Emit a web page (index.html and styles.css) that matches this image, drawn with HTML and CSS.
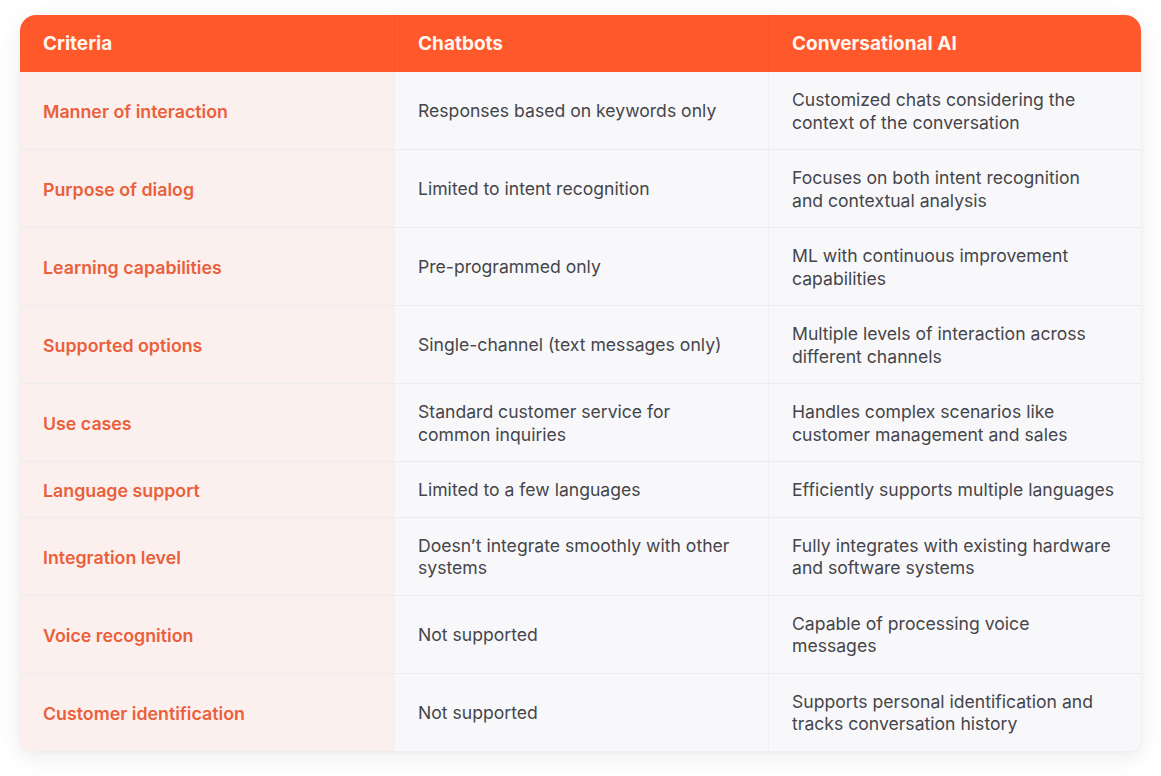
FILE: index.html
```html
<!DOCTYPE html>
<html lang="en">
<head>
<meta charset="utf-8">
<title>Chatbots vs Conversational AI</title>
<link rel="stylesheet" href="styles.css">
</head>
<body>
<div class="page">
  <div class="table">
    <div class="row head">
      <div class="cell">Criteria</div>
      <div class="cell">Chatbots</div>
      <div class="cell">Conversational AI</div>
    </div>
    <div class="row">
      <div class="cell crit">Manner of interaction</div>
      <div class="cell">Responses based on keywords only</div>
      <div class="cell">Customized chats considering the context of the conversation</div>
    </div>
    <div class="row">
      <div class="cell crit">Purpose of dialog</div>
      <div class="cell">Limited to intent recognition</div>
      <div class="cell">Focuses on both intent recognition and contextual analysis</div>
    </div>
    <div class="row">
      <div class="cell crit">Learning capabilities</div>
      <div class="cell">Pre-programmed only</div>
      <div class="cell">ML with continuous improvement capabilities</div>
    </div>
    <div class="row">
      <div class="cell crit">Supported options</div>
      <div class="cell">Single-channel (text messages only)</div>
      <div class="cell">Multiple levels of interaction across different channels</div>
    </div>
    <div class="row">
      <div class="cell crit">Use cases</div>
      <div class="cell">Standard customer service for common inquiries</div>
      <div class="cell">Handles complex scenarios like customer management and sales</div>
    </div>
    <div class="row">
      <div class="cell crit">Language support</div>
      <div class="cell">Limited to a few languages</div>
      <div class="cell">Efficiently supports multiple languages</div>
    </div>
    <div class="row">
      <div class="cell crit">Integration level</div>
      <div class="cell">Doesn’t integrate smoothly with other systems</div>
      <div class="cell">Fully integrates with existing hardware and software systems</div>
    </div>
    <div class="row">
      <div class="cell crit">Voice recognition</div>
      <div class="cell">Not supported</div>
      <div class="cell">Capable of processing voice messages</div>
    </div>
    <div class="row last">
      <div class="cell crit">Customer identification</div>
      <div class="cell">Not supported</div>
      <div class="cell">Supports personal identification and tracks conversation history</div>
    </div>
  </div>
</div>
</body>
</html>
```

FILE: styles.css
```css
* { box-sizing: border-box; }
html, body { margin: 0; padding: 0; background: #ffffff; }
body {
  font-family: Inter, "Noto Sans", "Liberation Sans", sans-serif;
  color: #45454b;
}
.page {
  padding: 15px 20px 25px 20px;
}
.table {
  width: 1121px;
  border-radius: 16px 16px 10px 10px;
  overflow: hidden;
  background: #f8f8fa;
  box-shadow: 0 6px 24px rgba(30, 20, 40, 0.08), 0 1px 4px rgba(30, 20, 40, 0.04);
}
.row {
  display: grid;
  grid-template-columns: 374px 374px 373px;
  border-bottom: 1px solid #ececf0;
}
.row.last { border-bottom: none; }
.cell {
  display: flex;
  align-items: center;
  padding: 17px 26px 15px 23px;
  font-size: 17.6px;
  line-height: 22.5px;
  border-left: 1px solid #f0f0f3;
}
.cell:first-child { border-left: none; }
.crit {
  background: #fcf0ef;
  color: #e9603b;
  font-weight: 600;
  font-size: 17.8px;
  padding-top: 18px;
  padding-bottom: 14px;
}
.head {
  background: #ff582b;
  border-bottom: none;
  height: 57px;
}
.head .cell {
  padding: 2px 23px 0 23px;
  color: #fff6ef;
  font-weight: 700;
  font-size: 19px;
  border-left: 1px solid #f5552a;
}
.head .cell:first-child { border-left: none; }
```
